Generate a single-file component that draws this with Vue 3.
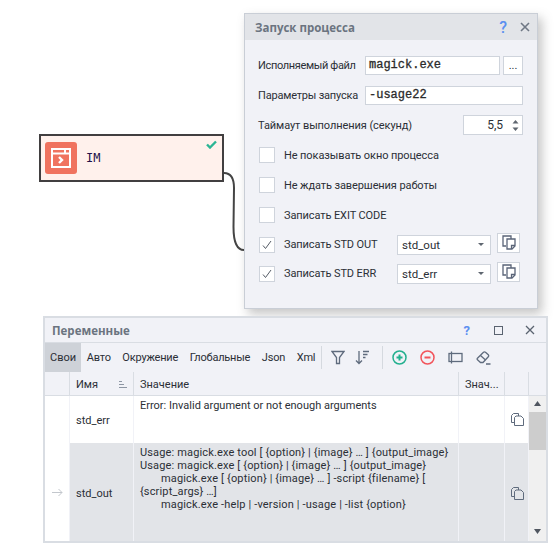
<script setup>
const tabs = ['Авто', 'Окружение', 'Глобальные', 'Json', 'Xml'];

const checks = [
  { label: 'Не показывать окно процесса' },
  { label: 'Не ждать завершения работы' },
  { label: 'Записать EXIT CODE' },
  { label: 'Записать STD OUT', on: true, value: 'std_out' },
  { label: 'Записать STD ERR', on: true, value: 'std_err' }
];

const outLines = [
  { text: 'Usage: magick.exe tool [ {option} | {image} … ] {output_image}' },
  { text: 'Usage: magick.exe [ {option} | {image} … ] {output_image}' },
  { text: 'magick.exe [ {option} | {image} … ] -script {filename} [', indent: true },
  { text: '{script_args} …]' },
  { text: 'magick.exe -help | -version | -usage | -list {option}', indent: true }
];
</script>

<template>
  <div class="canvas">
    <div class="node">
      <div class="node-icon">
        <svg width="20" height="20" viewBox="0 0 20 20" fill="none" stroke="#fff" stroke-width="2">
          <rect x="1" y="1" width="18" height="18" />
          <path d="M1 5.5h18" />
          <path d="M14 2v3" />
          <path d="M8 9l3 3-3 3" stroke-width="2.4" />
        </svg>
      </div>
      <span class="node-name">IM</span>
      <svg class="node-check" width="11" height="9" viewBox="0 0 11 9">
        <path d="M1 4.5l3 3 6-6" fill="none" stroke="#2bb594" stroke-width="2.4" />
      </svg>
    </div>

    <svg class="wire" width="24" height="84" viewBox="0 0 24 84" fill="none">
      <path d="M0 1C7 1 10 6 10 16L9.500 55C9.500 70 13 78 20 78" stroke="#444" stroke-width="2" />
    </svg>

    <section class="dialog">
      <header class="dialog-title">
        <span class="title-text">Запуск процесса</span>
        <span class="help help-big">?</span>
        <svg class="close" width="10" height="10" viewBox="0 0 10 10">
          <path d="M1 1l8 8M9 1l-8 8" stroke="#6f7885" stroke-width="1.6" />
        </svg>
      </header>
      <div class="dialog-body">
        <div class="row">
          <label class="field-label file-label">Исполняемый файл</label>
          <div class="input mono file-input">magick.exe</div>
          <div class="dots">...</div>
        </div>
        <div class="row">
          <label class="field-label">Параметры запуска</label>
          <div class="input mono params-input">-usage22</div>
        </div>
        <div class="row">
          <label class="field-label timeout-label">Таймаут выполнения (секунд)</label>
          <div class="spinner">
            <span>5,5</span>
            <svg width="7" height="13" viewBox="0 0 7 13">
              <path d="M3.5 1l3 3.5h-6zM3.5 12l3-3.5h-6z" fill="#5f6670" />
            </svg>
          </div>
        </div>
        <div v-for="item in checks" :key="item.label" class="row" :class="{ 'var-row': item.value }">
          <div class="checkbox">
            <svg v-if="item.on" width="10" height="10" viewBox="0 0 10 10">
              <path d="M1 5.5l2.5 3L9 1" fill="none" stroke="#555c66" stroke-width="1" />
            </svg>
          </div>
          <span class="check-label" :class="{ short: item.value }">{{ item.label }}</span>
          <template v-if="item.value">
            <div class="select">
              <span>{{ item.value }}</span>
              <i class="caret"></i>
            </div>
            <div class="copy-btn">
              <svg width="14" height="15" viewBox="0 0 14 15" fill="#fff" stroke="#5a6478" stroke-width="1.300">
                <path d="M4 11H1V1h8v3" />
                <path d="M5 4h8v7l-3 3H5z" />
                <path d="M9.500 14v-3.500H13" fill="none" />
              </svg>
            </div>
          </template>
        </div>
      </div>
    </section>

    <section class="vars">
      <header class="vars-title">
        <span class="title-text">Переменные</span>
        <span class="help">?</span>
        <i class="maximize"></i>
        <svg class="close" width="10" height="10" viewBox="0 0 10 10">
          <path d="M1 1l8 8M9 1l-8 8" stroke="#5a6370" stroke-width="1.3" />
        </svg>
      </header>

      <div class="toolbar">
        <div class="tabs">
          <span class="tab active">Свои</span>
          <span v-for="tab in tabs" :key="tab" class="tab">{{ tab }}</span>
        </div>
        <i class="sep"></i>
        <svg class="tool tight" width="14" height="15" viewBox="0 0 14 15" fill="none" stroke="#5f6b7d" stroke-width="1.3">
          <path d="M1 1.500h12L8.500 7.500v6h-3v-6z" />
        </svg>
        <svg class="tool tight" width="15" height="15" viewBox="0 0 15 15" fill="none" stroke="#5f6b7d" stroke-width="1.3">
          <path d="M4 1v12.500M1 10.500L4 13.500l3-3M8 1.500h6M8 4.500h4.500M8 7.500h2.500" />
        </svg>
        <i class="sep"></i>
        <svg class="tool" width="15" height="15" viewBox="0 0 15 15" fill="none" stroke="#23b08f" stroke-width="1.5">
          <circle cx="7.500" cy="7.500" r="6.500" />
          <path d="M4.500 7.500h6M7.500 4.500v6" stroke-width="2" />
        </svg>
        <svg class="tool" width="15" height="15" viewBox="0 0 15 15" fill="none" stroke="#f2545b" stroke-width="1.5">
          <circle cx="7.500" cy="7.500" r="6.500" />
          <path d="M4.500 7.500h6" stroke-width="2" />
        </svg>
        <svg class="tool" width="15" height="13" viewBox="0 0 15 13" fill="none" stroke="#5f6b7d" stroke-width="1.300">
          <rect x="1" y="2.500" width="13" height="8" />
          <path d="M3.500 0.500v12" />
        </svg>
        <svg class="tool" width="15" height="15" viewBox="0 0 15 15" fill="none" stroke="#5f6b7d" stroke-width="1.300">
          <path d="M1.200 8.500L7.500 2.200a1.400 1.400 0 0 1 2 0l2.800 2.600a1.400 1.400 0 0 1 0 2L7 12.500H4.500L1.200 9.500z" />
          <path d="M4.500 5.500l5 4.500M10 14h4.500" />
        </svg>
      </div>

      <div class="table">
        <div class="grid head">
          <div class="cell"></div>
          <div class="cell name-head">
            <span>Имя</span>
            <svg width="8" height="7" viewBox="0 0 8 7" stroke="#8d96a3">
              <path d="M0 .5h3M0 3.500h5M0 6.500h8" />
            </svg>
          </div>
          <div class="cell">Значение</div>
          <div class="cell">Знач...</div>
          <div class="cell"></div>
        </div>
        <div class="body">
          <div class="rows">
            <div class="grid row-err">
              <div class="cell"></div>
              <div class="cell center">std_err</div>
              <div class="cell value">Error: Invalid argument or not enough arguments</div>
              <div class="cell"></div>
              <div class="cell icon-cell">
                <svg width="15" height="15" viewBox="0 0 15 15" fill="none" stroke="#5f6b7d">
                  <path d="M4 10.500H1.500V3.500l2-2H8.500V4" />
                  <path d="M4.500 5.500l1.500-1.500h5l2.500 2.500v7h-9z" />
                </svg>
              </div>
            </div>
            <div class="grid row-out">
              <div class="cell arrow">
                <svg width="11" height="9" viewBox="0 0 11 9" fill="none" stroke="#c3c7cd">
                  <path d="M0 4.500h10M6.500 1l3.500 3.500L6.500 8" />
                </svg>
              </div>
              <div class="cell center">std_out</div>
              <div class="cell value">
                <div v-for="line in outLines" :key="line.text" :class="{ indent: line.indent }">{{ line.text }}</div>
              </div>
              <div class="cell"></div>
              <div class="cell icon-cell">
                <svg width="15" height="15" viewBox="0 0 15 15" fill="none" stroke="#5f6b7d">
                  <path d="M4 10.500H1.500V3.500l2-2H8.500V4" />
                  <path d="M4.500 5.500l1.500-1.500h5l2.500 2.500v7h-9z" />
                </svg>
              </div>
            </div>
          </div>
          <div class="scrollbar">
            <svg width="7" height="5" viewBox="0 0 7 5"><path d="M3.500 0L7 5H0z" fill="#505660" /></svg>
            <i class="thumb"></i>
            <svg class="down" width="7" height="5" viewBox="0 0 7 5"><path d="M3.500 5L7 0H0z" fill="#505660" /></svg>
          </div>
        </div>
      </div>
    </section>
  </div>
</template>

<style>
body {
  background: #fff;
}
</style>

<style scoped>
.canvas {
  position: relative;
  width: 554px;
  height: 550px;
  overflow: hidden;
  background: #fff;
  font-family: Roboto, "Noto Sans", sans-serif;
  font-size: 11px;
  color: #2b2f36;
}

.node {
  position: absolute;
  left: 39px;
  top: 134px;
  width: 185px;
  height: 48px;
  box-sizing: border-box;
  border: 2px solid #413f40;
  background: #fff1ec;
  display: flex;
  align-items: center;
  padding: 0 4px;
}

.node-icon {
  width: 32px;
  height: 32px;
  border-radius: 3px;
  background: #f0735f;
  display: flex;
  align-items: center;
  justify-content: center;
}

.node-name {
  margin-left: 9px;
  font-family: "DejaVu Sans Mono", monospace;
  font-size: 12px;
  color: #22124a;
}

.node-check {
  position: absolute;
  right: 5px;
  top: 4px;
}

.wire {
  position: absolute;
  left: 224px;
  top: 172px;
}

.dialog {
  position: absolute;
  left: 244px;
  top: 13px;
  width: 294px;
  height: 296px;
  box-sizing: border-box;
  border: 1px solid #c9ced6;
  background: #f1f2f7;
  box-shadow: 4px 5px 10px rgba(90, 90, 90, 0.35);
}

.dialog-title {
  height: 26px;
  background: #e2e4e8;
  display: flex;
  align-items: center;
  padding: 0 7px 0 10px;
}

.title-text {
  flex: 1;
  font-family: "Open Sans", sans-serif;
  font-weight: 700;
  font-size: 11.5px;
  color: #6b7480;
}

.help {
  color: #5b8ff0;
  font-weight: 700;
  font-size: 13px;
  margin-right: 24px;
}

.help-big {
  font-size: 16px;
  font-weight: 500;
  margin-right: 13px;
}

.dialog-body {
  padding: 10px 13px 0 13px;
}

.row {
  height: 30px;
  display: flex;
  align-items: center;
  width: 265px;
}

.row.var-row {
  height: 29px;
}

.field-label {
  flex: 1;
  white-space: nowrap;
  letter-spacing: -0.2px;
}

.field-label.file-label {
  letter-spacing: -0.35px;
}

.field-label.timeout-label {
  letter-spacing: -0.08px;
}

.input,
.dots,
.spinner,
.select,
.copy-btn {
  box-sizing: border-box;
  background: #fff;
  border: 1px solid #cfd4dc;
}

.input {
  height: 19px;
  line-height: 17px;
  padding-left: 3px;
}

.mono {
  font-family: "Liberation Mono", monospace;
  font-size: 12px;
  color: #2b2b2b;
  -webkit-text-stroke: 0.3px #2b2b2b;
}

.file-input {
  width: 135px;
}

.params-input {
  width: 158px;
}

.dots {
  width: 20px;
  height: 19px;
  margin-left: 3px;
  text-align: center;
  line-height: 18px;
  flex: none;
}

.spinner {
  width: 60px;
  height: 20px;
  display: flex;
  align-items: center;
  justify-content: flex-end;
  gap: 9px;
  padding-right: 3px;
  font-size: 12px;
}

.checkbox {
  width: 16px;
  height: 16px;
  box-sizing: border-box;
  margin-left: 1px;
  background: #fff;
  border: 1px solid #cfd4dc;
  display: flex;
  align-items: center;
  justify-content: center;
  flex: none;
}

.check-label {
  margin-left: 9px;
  white-space: nowrap;
  letter-spacing: -0.1px;
}

.check-label.short {
  width: 113px;
}

.select {
  width: 94px;
  height: 20px;
  display: flex;
  align-items: center;
  justify-content: space-between;
  padding: 0 6px 0 4px;
  font-size: 11.5px;
  flex: none;
}

.caret {
  width: 0;
  height: 0;
  border-left: 3.5px solid transparent;
  border-right: 3.5px solid transparent;
  border-top: 3.5px solid #5f6670;
}

.copy-btn {
  width: 23px;
  height: 20px;
  margin: -4px 0 0 6px;
  display: flex;
  align-items: center;
  justify-content: center;
  flex: none;
}

.vars {
  position: absolute;
  left: 43px;
  top: 316px;
  width: 505px;
  height: 227px;
  box-sizing: border-box;
  border: 2px solid #d9dde3;
  background: #f1f2f7;
}

.vars-title {
  height: 24px;
  display: flex;
  align-items: center;
  padding: 0 11px 0 7px;
  border-bottom: 1px solid #d9dde3;
}

.maximize {
  width: 9px;
  height: 9px;
  box-sizing: border-box;
  border: 1px solid #5a6370;
  margin-right: 22px;
}

.toolbar {
  height: 29px;
  display: flex;
  align-items: center;
}

.tabs {
  width: 274px;
  display: flex;
  flex: none;
}

.tab {
  height: 29px;
  line-height: 30px;
  padding: 0 5.8px;
  white-space: nowrap;
  letter-spacing: -0.2px;
}

.tab.active {
  background: #ced2d8;
  width: 36px;
  box-sizing: border-box;
  padding: 0 5px;
  letter-spacing: 0;
}

.sep {
  width: 1px;
  height: 23px;
  margin: 0 9px 0 2px;
  background: #d5d9df;
  flex: none;
}

.tool {
  margin-right: 13px;
  flex: none;
}

.tool.tight {
  margin-right: 10px;
}

.table {
  font-size: 11px;
}

.grid {
  display: grid;
  grid-template-columns: 25px 64px 325px 46px 24px;
}

.head {
  height: 24px;
  border-bottom: 1px solid #d9dde3;
  box-sizing: border-box;
}

.head .cell {
  border-right: 1px solid #d9dde3;
  display: flex;
  align-items: center;
  padding: 1px 0 0 6px;
  box-sizing: border-box;
  white-space: nowrap;
}

.head .cell:first-child {
  padding: 0;
}

.head .name-head {
  justify-content: space-between;
  padding-right: 6px;
}

.body {
  display: flex;
}

.rows {
  width: 484px;
}

.row-err {
  height: 47px;
  background: #fff;
}

.row-out {
  height: 98px;
  background: #e2e4e8;
}

.row-err .cell,
.row-out .cell {
  border-right: 1px solid #f1f2f7;
  box-sizing: border-box;
}

.cell.center {
  display: flex;
  align-items: center;
  padding: 2px 0 0 6px;
}

.value {
  padding: 3px 6px;
  line-height: 13px;
  white-space: nowrap;
}

.row-out .value {
  padding-top: 3px;
  letter-spacing: 0.15px;
}

.indent {
  padding-left: 21px;
}

.arrow {
  display: flex;
  align-items: center;
  justify-content: center;
  background: #fff;
}

.icon-cell {
  display: flex;
  align-items: center;
  justify-content: center;
  padding-left: 2px;
}

.row-out .icon-cell {
  padding-top: 3px;
}

.scrollbar {
  width: 17px;
  height: 145px;
  background: #f0f0f0;
  display: flex;
  flex-direction: column;
  align-items: center;
  padding-top: 5px;
  box-sizing: border-box;
}

.thumb {
  width: 17px;
  height: 38px;
  margin-top: 6px;
  background: #cdcdcd;
}

.down {
  margin-top: auto;
  margin-bottom: 7px;
}
</style>
